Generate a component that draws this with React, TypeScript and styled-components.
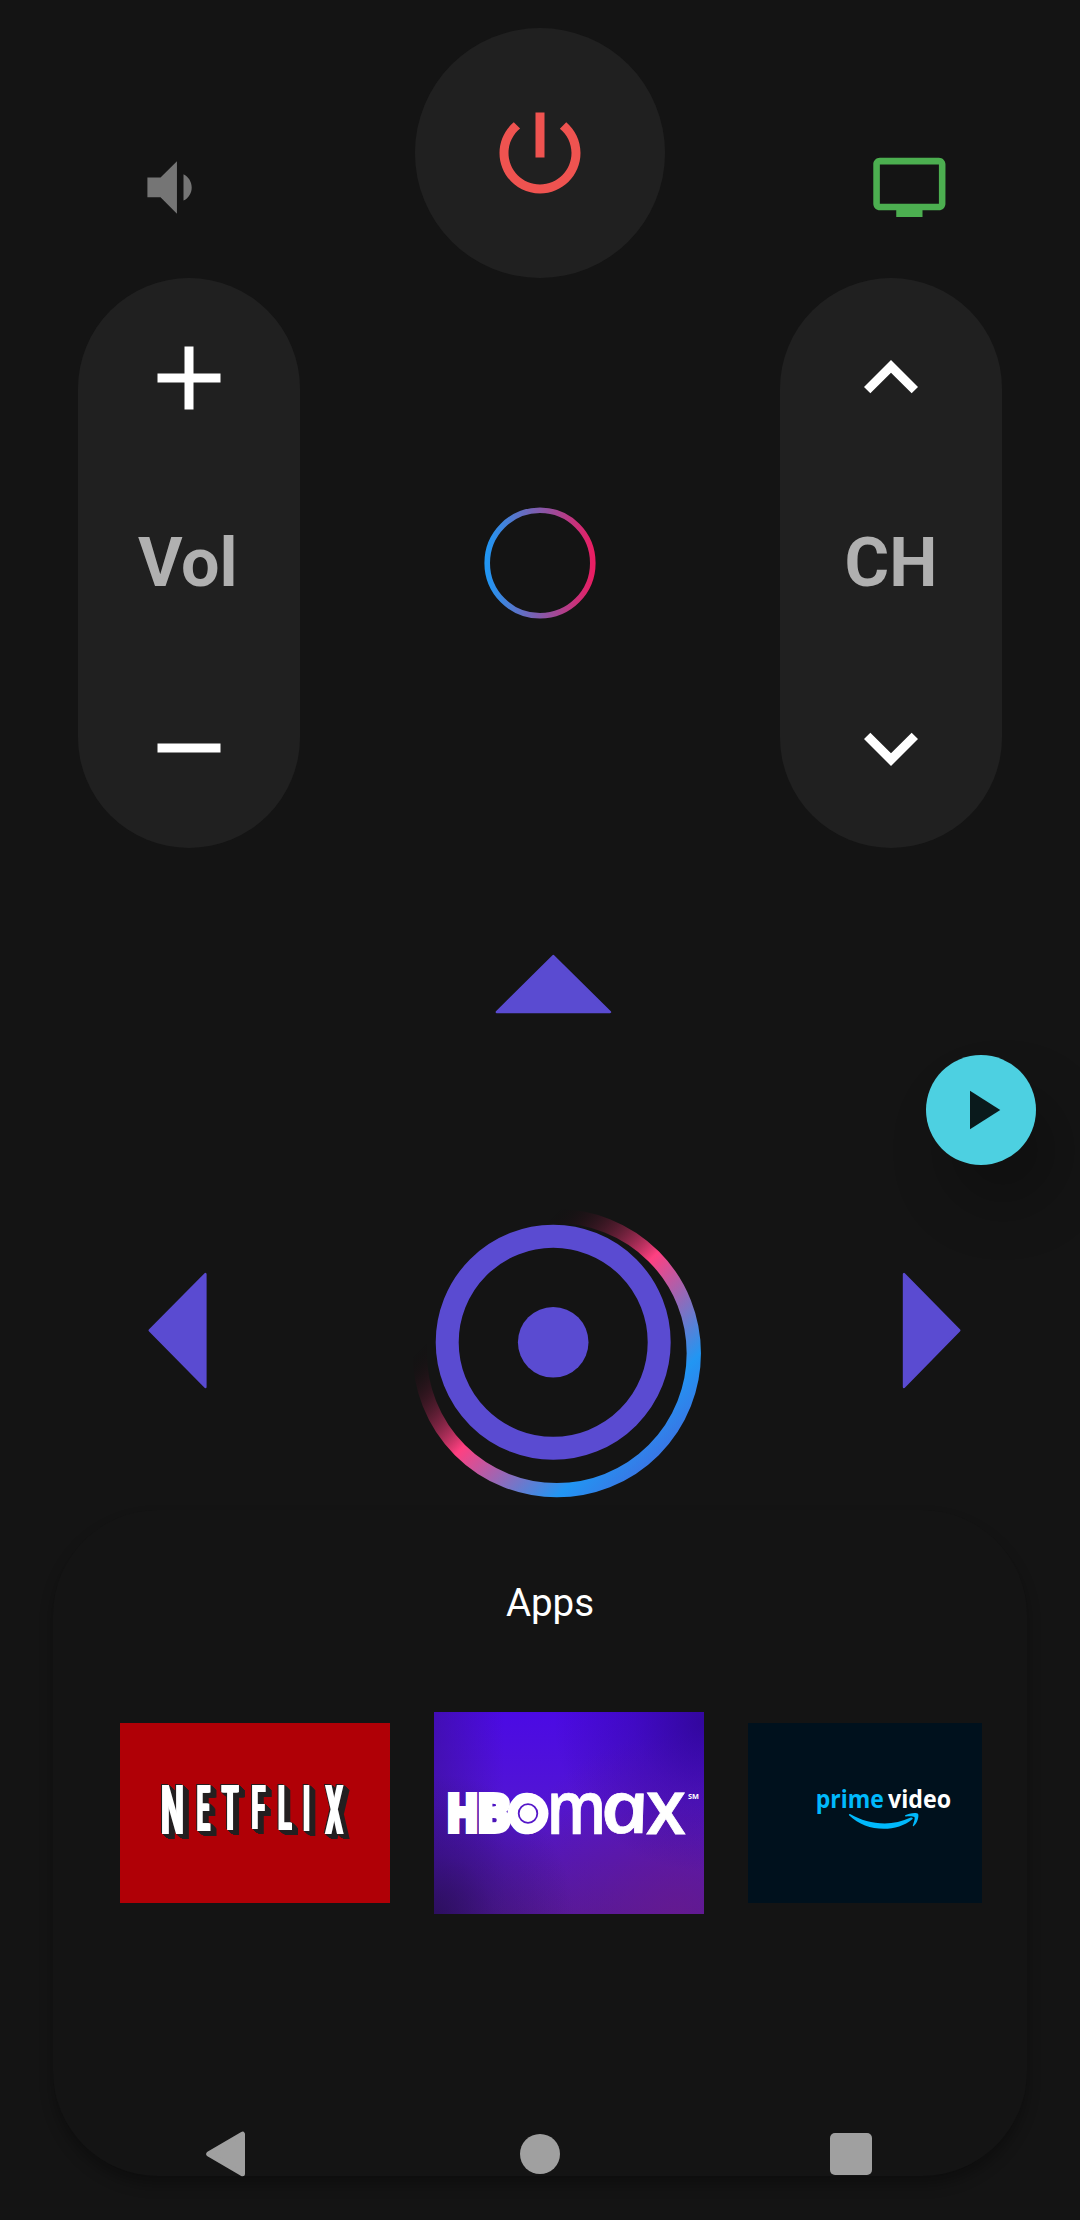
import React from "react";
import styled, { createGlobalStyle } from "styled-components";

const GlobalStyle = createGlobalStyle`
  *, *::before, *::after { box-sizing: border-box; }
  body { margin: 0; background: #141414; }
`;

const Screen = styled.main`
  position: relative;
  display: flex;
  flex-direction: column;
  width: 1080px;
  height: 2220px;
  padding-top: 27.5px;
  overflow: hidden;
  background: #141414;
  font-family: Roboto, "Liberation Sans", sans-serif;
`;

const IconButton = styled.button<{ $size: number; $color: string }>`
  display: flex;
  align-items: center;
  justify-content: center;
  flex: none;
  width: ${(p) => p.$size}px;
  height: ${(p) => p.$size}px;
  padding: 0;
  border: 0;
  background: none;
  color: ${(p) => p.$color};
`;

const Glyph = styled.svg`
  display: block;
  width: 100%;
  height: 100%;
  fill: currentColor;
`;

const Header = styled.header`
  display: grid;
  grid-template-columns: 1fr 250.5px 1fr;
  height: 250.5px;
`;

const HeaderSide = styled.div<{ $inset: number }>`
  padding: 120.2px 0 0 ${(p) => p.$inset}px;
`;

const PowerButton = styled.div`
  display: flex;
  align-items: center;
  justify-content: center;
  border-radius: 50%;
  background: #202020;
`;

const Rockers = styled.section`
  display: flex;
  align-items: center;
  justify-content: space-between;
  height: 570px;
  padding: 0 78px;
`;

const Rocker = styled.div`
  display: flex;
  flex-direction: column;
  align-items: center;
  justify-content: space-between;
  width: 222px;
  height: 570px;
  padding: 46px 0;
  border-radius: 111px;
  background: #202020;
`;

const RockerLabel = styled.span<{ $nudge?: number }>`
  padding-right: ${(p) => p.$nudge ?? 0}px;
  color: #b0b0b0;
  font-size: 68.25px;
  font-weight: 700;
  line-height: 80px;
`;

const Ring = styled.svg`
  display: block;
  width: 112px;
  height: 112px;
`;

const DPad = styled.section`
  display: flex;
  flex-direction: column;
  height: 662px;
  padding-top: 106px;
`;

const UpRow = styled.div`
  display: flex;
  padding-left: 495px;
  height: 255px;
`;

const MiddleRow = styled.div`
  display: flex;
  align-items: flex-start;
  padding-left: 148px;
`;

const SideArrow = styled.div`
  padding-top: 63px;
`;

const Arrow = styled.svg`
  display: block;
  fill: #5a4bd1;
  stroke: #5a4bd1;
  stroke-width: 2.4;
  stroke-linejoin: round;
`;

const OkDial = styled.svg`
  display: block;
  width: 290px;
  height: 290px;
  margin: 0 199.5px 0 205px;
`;

const AppsPanel = styled.section`
  display: flex;
  flex-direction: column;
  height: 666px;
  margin: 0 53px;
  padding-top: 69px;
  border-radius: 105px;
  background: #141414;
  box-shadow: 0 9px 14px rgba(0, 0, 0, 0.3);
`;

const AppsTitle = styled.h2`
  margin: 0 0 86px;
  padding-left: 20px;
  color: #fff;
  font-size: 38.5px;
  font-weight: 400;
  line-height: 47px;
  text-align: center;
`;

const AppList = styled.div`
  display: flex;
  align-items: center;
  gap: 44px;
  width: 862px;
  margin-left: 67px;
  overflow: hidden;
`;

const AppTile = styled.div<{ $height: number; $bg: string }>`
  flex: none;
  width: 270px;
  height: ${(p) => p.$height}px;
  background: ${(p) => p.$bg};
`;

const Logo = styled.svg`
  display: block;
  width: 100%;
  height: 100%;
`;

const NetflixLetters = styled.g`
  filter: drop-shadow(1px 0 0 #fff) drop-shadow(1px 0 0 #fff)
    drop-shadow(-1px -1px 0 #231f20) drop-shadow(1px 1px 0 #231f20)
    drop-shadow(1px 1px 0 #231f20) drop-shadow(2px 2px 0 #231f20)
    drop-shadow(2px 1px 0 #231f20);
`;

const PlayFab = styled.button`
  position: absolute;
  top: 1055px;
  left: 926px;
  display: flex;
  align-items: center;
  justify-content: center;
  width: 110px;
  height: 110px;
  padding: 0;
  border: 0;
  border-radius: 50%;
  background: #4dd0e1;
  color: #0a1a1c;
  box-shadow: 22px 40px 60px rgba(0, 0, 0, 0.24);
`;

const SystemNav = styled.nav`
  position: absolute;
  left: 0;
  right: 0;
  bottom: 43px;
  display: flex;
  align-items: center;
  justify-content: space-between;
  height: 46px;
  padding: 0 208px 0 206px;
`;

const HomeDot = styled.span`
  width: 40.5px;
  height: 40.5px;
  margin-left: 4px;
  border-radius: 50%;
  background: #a0a0a0;
`;

const RecentSquare = styled.span`
  width: 42px;
  height: 42px;
  border-radius: 5px;
  background: #a0a0a0;
`;

type Letter = { ch: string; x: number; y: number; sx: number; sy: number };

const netflix: Letter[] = [
  { ch: "N", x: 40, y: 111, sx: 0.325, sy: 0.68 },
  { ch: "E", x: 75.8, y: 108, sx: 0.235, sy: 0.645 },
  { ch: "T", x: 100.8, y: 106.5, sx: 0.27, sy: 0.625 },
  { ch: "F", x: 130.4, y: 106, sx: 0.25, sy: 0.617 },
  { ch: "L", x: 157, y: 107, sx: 0.25, sy: 0.631 },
  { ch: "I", x: 182, y: 108.3, sx: 0.24, sy: 0.65 },
  { ch: "X", x: 204.6, y: 110.5, sx: 0.275, sy: 0.68 },
];

function Icon({ d }: { d: string }) {
  return (
    <Glyph viewBox="0 0 24 24">
      <path d={d} />
    </Glyph>
  );
}

function NetflixLogo() {
  return (
    <Logo viewBox="0 0 270 180">
      <NetflixLetters>
        {netflix.map((l) => (
          <text
            key={l.ch}
            transform={`translate(${l.x} ${l.y}) scale(${l.sx} ${l.sy})`}
            fontFamily="Roboto, sans-serif"
            fontWeight="700"
            fontSize="100"
            fill="#fff"
          >
            {l.ch}
          </text>
        ))}
      </NetflixLetters>
    </Logo>
  );
}

function HboLogo() {
  return (
    <Logo viewBox="0 0 270 202" fill="#fff">
      <g fontFamily="'Open Sans', sans-serif" fontWeight="800" fontSize="50" stroke="#fff" strokeWidth="3.6">
        <text transform="translate(12.2 120) scale(0.85 1.05)">H</text>
        <text transform="translate(42.8 120) scale(1.02 1.05)">B</text>
        <text transform="translate(75.2 120) scale(0.88 1.02)">O</text>
      </g>
      <circle cx="94" cy="101.5" r="20.5" />
      <circle cx="94" cy="101.5" r="9.3" fill="none" stroke="#5517c9" strokeWidth="1.8" />
      <g fontFamily="'Open Sans', sans-serif" fontWeight="600" fontSize="50" stroke="#fff" strokeWidth="0.5">
        <text transform="translate(112.6 121.8) scale(1.26 1.47)">m</text>
        <text transform="translate(170.6 121.4) skewX(12) scale(1.68 1.45)" fontStyle="italic">
          a
        </text>
        <text transform="translate(211.8 121.8) scale(1.46 1.52)">x</text>
      </g>
      <text x="254" y="87.2" fontFamily="'Open Sans', sans-serif" fontWeight="700" fontSize="7.4">
        SM
      </text>
    </Logo>
  );
}

function PrimeLogo() {
  return (
    <Logo viewBox="0 0 270 180">
      <g fontFamily="'Open Sans', sans-serif" fontWeight="700" fontSize="25.6">
        <text x="67.8" y="84.6" fill="#00b9fc" textLength="68" lengthAdjust="spacingAndGlyphs">
          prime
        </text>
        <text x="140" y="84.6" fill="#fff" textLength="63" lengthAdjust="spacingAndGlyphs">
          video
        </text>
      </g>
      <path
        fill="#00b9fc"
        d="M101.3 91.2c-.6.3-.5.8 0 1.3 9 8.7 21.5 13.3 34.5 13.3 10.5 0 21-3.2 28.5-9.6 1.2-1-.1-2.2-1.500-1.600-8.500 4-17.500 5.800-26 5.800-12.500 0-24.500-3.400-34.300-9.100-.4-.2-.8-.3-1.200-.1z"
      />
      <path
        fill="#00b9fc"
        d="M157.3 92.2c2.6-1.9 11.3-3.2 12.7-1.5 1.3 1.7-.5 9.5-4.3 12.3-.6.5-1.200.1-.9-.5.9-2.200 2.500-7.100 1.600-8.400-.9-1.200-6.100-.9-8.700-.7-.7 0-1-.6-.4-1.200z"
      />
    </Logo>
  );
}

const hboBackground = [
  "radial-gradient(circle at 0% 100%, rgba(38,14,80,.8) 0, rgba(38,14,80,.35) 60px, rgba(38,14,80,0) 140px)",
  "radial-gradient(circle at 100% 5%, rgba(44,6,140,.8) 0, rgba(44,6,140,.35) 70px, rgba(44,6,140,0) 150px)",
  "radial-gradient(circle at 90% 100%, rgba(104,26,140,.75) 0, rgba(104,26,140,.35) 80px, rgba(104,26,140,0) 180px)",
  "linear-gradient(90deg, rgba(60,16,150,.6) 0, rgba(60,16,150,0) 70px)",
  "linear-gradient(180deg, #4b0ae4 0, #5215d4 45%, #54199c 100%)",
].join(", ");

export default function App() {
  return (
    <>
      <GlobalStyle />
      <Screen>
        <Header>
          <HeaderSide $inset={130.6}>
            <IconButton $size={78.75} $color="#757575" aria-label="Mute">
              <Icon d="M18.5 12c0-1.77-1.02-3.29-2.5-4.03v8.05c1.48-.73 2.5-2.25 2.5-4.02zM5 9v6h4l5 5V4L9 9H5z" />
            </IconButton>
          </HeaderSide>
          <PowerButton>
            <IconButton $size={108} $color="#ef5350" aria-label="Power">
              <Icon d="M13 3h-2v10h2V3zm4.83 2.17l-1.42 1.42C17.99 7.86 19 9.81 19 12c0 3.87-3.13 7-7 7s-7-3.13-7-7c0-2.19 1.01-4.14 2.58-5.42L6.17 5.17C4.23 6.82 3 9.26 3 12c0 4.97 4.03 9 9 9s9-4.03 9-9c0-2.74-1.23-5.18-3.17-6.83z" />
            </IconButton>
          </PowerButton>
          <HeaderSide $inset={204.8}>
            <IconButton $size={78.75} $color="#4caf50" aria-label="Source">
              <Icon d="M21 3H3c-1.11 0-2 .89-2 2v12c0 1.1.89 2 2 2h5v2h8v-2h5c1.1 0 1.99-.9 1.99-2L23 5c0-1.11-.9-2-2-2zm0 14H3V5h18v12z" />
            </IconButton>
          </HeaderSide>
        </Header>

        <Rockers>
          <Rocker>
            <IconButton $size={108} $color="#fff" aria-label="Volume up">
              <Icon d="M19 13h-6v6h-2v-6H5v-2h6V5h2v6h6v2z" />
            </IconButton>
            <RockerLabel $nudge={2.5}>Vol</RockerLabel>
            <IconButton $size={108} $color="#fff" aria-label="Volume down">
              <Icon d="M19 13H5v-2h14v2z" />
            </IconButton>
          </Rocker>
          <Ring viewBox="0 0 112 112">
            <defs>
              <linearGradient id="ring" x1="0" x2="1" y1="0" y2="0">
                <stop offset="0" stopColor="#2196f3" />
                <stop offset="1" stopColor="#e91e63" />
              </linearGradient>
            </defs>
            <circle cx="56" cy="56" r="52.8" fill="none" stroke="url(#ring)" strokeWidth="5.6" />
          </Ring>
          <Rocker>
            <IconButton $size={108} $color="#fff" aria-label="Channel up">
              <Icon d="M7.41 15.41L12 10.83l4.59 4.58L18 14l-6-6-6 6z" />
            </IconButton>
            <RockerLabel>CH</RockerLabel>
            <IconButton $size={108} $color="#fff" aria-label="Channel down">
              <Icon d="M7.41 8.59L12 13.17l4.59-4.58L18 10l-6 6-6-6z" />
            </IconButton>
          </Rocker>
        </Rockers>

        <DPad>
          <UpRow>
            <Arrow width="117" height="60" viewBox="0 0 117 60">
              <path d="M58.3 2L115 58H1.8z" />
            </Arrow>
          </UpRow>
          <MiddleRow>
            <SideArrow>
              <Arrow width="59" height="117" viewBox="0 0 59 117">
                <path d="M1.7 58.3L57.4 2v113z" />
              </Arrow>
            </SideArrow>
            <OkDial viewBox="0 0 290 290">
              <defs>
                <linearGradient
                  id="sweep"
                  gradientUnits="userSpaceOnUse"
                  x1="0.7"
                  y1="0"
                  x2="289"
                  y2="288.5"
                >
                  <stop offset="0.25" stopColor="#000" stopOpacity="0" />
                  <stop offset="0.5" stopColor="#ff4081" />
                  <stop offset="0.75" stopColor="#2196f3" />
                  <stop offset="1" stopColor="#5a4bd1" />
                </linearGradient>
              </defs>
              <circle cx="144.8" cy="144.2" r="137" fill="none" stroke="url(#sweep)" strokeWidth="14.3" />
              <circle cx="141.2" cy="133.3" r="106" fill="#141414" stroke="#5a4bd1" strokeWidth="23" />
              <circle cx="141.2" cy="133.3" r="35.3" fill="#5a4bd1" />
            </OkDial>
            <SideArrow>
              <Arrow width="59" height="117" viewBox="0 0 59 117">
                <path d="M57.3 58.3L2 2v113z" />
              </Arrow>
            </SideArrow>
          </MiddleRow>
        </DPad>

        <AppsPanel>
          <AppsTitle>Apps</AppsTitle>
          <AppList>
            <AppTile $height={180} $bg="#b00006">
              <NetflixLogo />
            </AppTile>
            <AppTile $height={202} $bg={hboBackground}>
              <HboLogo />
            </AppTile>
            <AppTile $height={180} $bg="#00111d">
              <PrimeLogo />
            </AppTile>
          </AppList>
        </AppsPanel>

        <PlayFab aria-label="Play">
          <IconButton as="span" $size={66} $color="#0a1a1c">
            <Icon d="M8 5v14l11-7z" />
          </IconButton>
        </PlayFab>

        <SystemNav>
          <svg width="40" height="46" viewBox="0 0 40 46" fill="#a0a0a0" stroke="#a0a0a0" strokeWidth="5" strokeLinejoin="round">
            <path d="M2.7 23L36.5 3.2v39.6z" />
          </svg>
          <HomeDot />
          <RecentSquare />
        </SystemNav>
      </Screen>
    </>
  );
}
